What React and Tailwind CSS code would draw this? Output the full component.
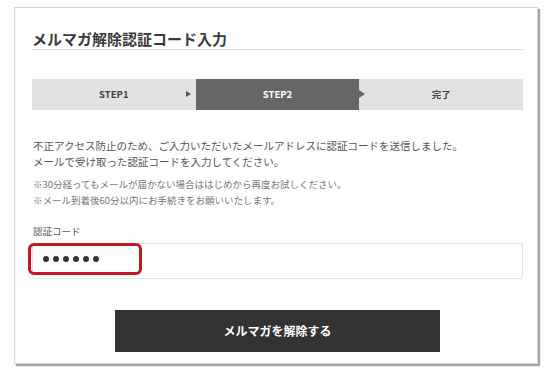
export default function App() {
  const steps = [
    { label: "STEP1", active: false },
    { label: "STEP2", active: true },
    { label: "完了", active: false },
  ];

  return (
    <div
      className="w-[550px] h-[369px] bg-white pt-[7px] pl-[14px]"
      style={{ fontFamily: '"Noto Sans CJK JP", "Noto Sans", sans-serif' }}
    >
      <div className="w-[524px] h-[357px] bg-white border border-[#d4d4d4] shadow-[2px_2px_1px_rgba(0,0,0,0.35)] pt-[21px] pl-[17px] pr-[14px]">
        {/* タイトル */}
        <h1 className="text-[15px] leading-[19px] font-bold text-[#3a3a3a] border-b border-[#dcdcdc] pb-[1px]">
          メルマガ解除認証コード入力
        </h1>

        {/* ステップ */}
        <div className="mt-[29px] flex h-[31px] bg-[#e2e2e2]">
          {steps.map((s, i) => (
            <div
              key={s.label}
              className={
                "relative flex-1 flex items-center justify-center text-[9.5px] font-bold " +
                (s.active ? "bg-[#666666] text-white" : "text-[#444]")
              }
            >
              {s.label}
              {i === 0 && (
                <span className="absolute right-[5px] top-[12px] w-0 h-0 border-y-[3.5px] border-y-transparent border-l-[5px] border-l-[#555]" />
              )}
              {s.active && (
                <span className="absolute right-[-6px] top-[11px] w-0 h-0 border-y-[4px] border-y-transparent border-l-[6px] border-l-[#666666] z-10" />
              )}
            </div>
          ))}
        </div>

        {/* 説明 */}
        <div className="mt-[28px] text-[10.5px] leading-[16px] text-[#555] pl-[1px]">
          <p>不正アクセス防止のため、ご入力いただいたメールアドレスに認証コードを送信しました。</p>
          <p>メールで受け取った認証コードを入力してください。</p>
        </div>
        <div className="mt-[6px] text-[9.5px] leading-[16px] text-[#777] pl-[1px]">
          <p>※30分経ってもメールが届かない場合ははじめから再度お試しください。</p>
          <p>※メール到着後60分以内にお手続きをお願いいたします。</p>
        </div>

        {/* 入力 */}
        <label className="block mt-[16px] text-[9.5px] leading-[14px] text-[#555] pl-[1px]">
          認証コード
        </label>
        <div className="relative mt-[5px] h-[36px] border border-[#e3e3e3] rounded-[2px]">
          <div className="absolute left-[-5px] top-[-1px] w-[114px] h-[32px] border-[3px] border-[#c4161c] rounded-[6px]" />
          <div className="flex items-center gap-[4px] h-full pl-[10px] pb-[4px]">
            {[0, 1, 2, 3, 4, 5].map((d) => (
              <span key={d} className="w-[6px] h-[6px] rounded-full bg-[#333]" />
            ))}
          </div>
        </div>

        {/* ボタン */}
        <div className="flex justify-center mt-[31px]">
          <button className="w-[325px] h-[42px] bg-[#333333] text-white text-[12px] font-bold">
            メルマガを解除する
          </button>
        </div>
      </div>
    </div>
  );
}
